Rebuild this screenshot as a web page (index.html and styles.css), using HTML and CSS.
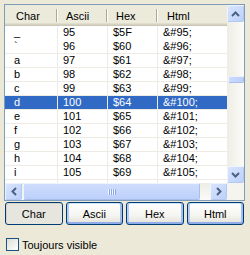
FILE: index.html
```html
<!DOCTYPE html>
<html>
<head>
<meta charset="utf-8">
<link rel="stylesheet" href="styles.css">
</head>
<body>
<div class="win">
  <div class="lv">
    <div class="view">
      <div class="hdr">
        <div class="hc c1">Char</div>
        <div class="hc">Ascii</div>
        <div class="hc">Hex</div>
        <div class="hc c4">Html</div>
      </div>
      <div class="rows">
        <div class="row noline"><div class="cell c1">_</div><div class="cell">95</div><div class="cell">$5F</div><div class="cell c4">&amp;#95;</div></div>
        <div class="row"><div class="cell c1">`</div><div class="cell">96</div><div class="cell">$60</div><div class="cell c4">&amp;#96;</div></div>
        <div class="row"><div class="cell c1">a</div><div class="cell">97</div><div class="cell">$61</div><div class="cell c4">&amp;#97;</div></div>
        <div class="row"><div class="cell c1">b</div><div class="cell">98</div><div class="cell">$62</div><div class="cell c4">&amp;#98;</div></div>
        <div class="row"><div class="cell c1">c</div><div class="cell">99</div><div class="cell">$63</div><div class="cell c4">&amp;#99;</div></div>
        <div class="row sel"><div class="cell c1">d</div><div class="cell">100</div><div class="cell">$64</div><div class="cell c4">&amp;#100;</div></div>
        <div class="row"><div class="cell c1">e</div><div class="cell">101</div><div class="cell">$65</div><div class="cell c4">&amp;#101;</div></div>
        <div class="row"><div class="cell c1">f</div><div class="cell">102</div><div class="cell">$66</div><div class="cell c4">&amp;#102;</div></div>
        <div class="row"><div class="cell c1">g</div><div class="cell">103</div><div class="cell">$67</div><div class="cell c4">&amp;#103;</div></div>
        <div class="row"><div class="cell c1">h</div><div class="cell">104</div><div class="cell">$68</div><div class="cell c4">&amp;#104;</div></div>
        <div class="row"><div class="cell c1">i</div><div class="cell">105</div><div class="cell">$69</div><div class="cell c4">&amp;#105;</div></div>
        <div class="row"><div class="cell c1"></div><div class="cell"></div><div class="cell"></div><div class="cell c4"></div></div>
      </div>
    </div>
    <div class="vscroll">
      <div class="sbtn"><svg width="9" height="6" viewBox="0 0 9 6"><polyline points="1,5 4.5,1.5 8,5" fill="none" stroke="#4D6185" stroke-width="2"/></svg></div>
      <div class="vtrack"><div class="vthumb"></div></div>
      <div class="sbtn"><svg width="9" height="6" viewBox="0 0 9 6"><polyline points="1,1 4.5,4.5 8,1" fill="none" stroke="#4D6185" stroke-width="2"/></svg></div>
    </div>
    <div class="hscroll">
      <div class="sbtn"><svg width="6" height="9" viewBox="0 0 6 9"><polyline points="5,1 1.5,4.5 5,8" fill="none" stroke="#4D6185" stroke-width="2"/></svg></div>
      <div class="hthumb"><span class="grip"></span></div>
      <div class="htrack"></div>
      <div class="sbtn"><svg width="6" height="9" viewBox="0 0 6 9"><polyline points="1,1 4.5,4.5 1,8" fill="none" stroke="#4D6185" stroke-width="2"/></svg></div>
    </div>
    <div class="corner"></div>
  </div>
  <div class="btns">
    <button class="btn pressed">Char</button>
    <button class="btn">Ascii</button>
    <button class="btn">Hex</button>
    <button class="btn">Html</button>
  </div>
  <label class="chk"><span class="box"></span>Toujours visible</label>
</div>
</body>
</html>
```
FILE: styles.css
```css
html, body {
  margin: 0;
  padding: 0;
}
body {
  width: 250px;
  height: 255px;
  overflow: hidden;
  background: #ECE9D8;
  font-family: "Liberation Sans", Arial, sans-serif;
  font-size: 11px;
  color: #000;
}
.win {
  padding: 4px 0 0 4px;
  display: flex;
  flex-direction: column;
}
.lv {
  width: 241px;
  height: 197px;
  box-sizing: border-box;
  border: 1px solid #7F9DB9;
  background: #fff;
  display: grid;
  grid-template-columns: 222px 17px;
  grid-template-rows: 178px 17px;
}
.view {
  overflow: hidden;
  min-height: 0;
}
.hdr {
  display: flex;
  height: 21px;
  width: 240px;
}
.hc {
  box-sizing: border-box;
  width: 50px;
  flex: none;
  padding: 3px 0 0 8px;
  line-height: 16px;
  white-space: nowrap;
  background:
    linear-gradient(#ACA899, #ACA899) right 1px top 4px / 1px 13px no-repeat,
    linear-gradient(#FFFFFF, #FFFFFF) right 0 top 4px / 1px 13px no-repeat,
    linear-gradient(to bottom, #EBEADB 0 18px, #E2DECD 18px 19px, #D6D2C2 19px 20px, #CBC7B8 20px 21px);
}
.hc.c1 {
  width: 53px;
  padding-left: 11px;
}
.hc.c4 {
  width: 87px;
  padding-left: 9px;
}
.rows {
  width: 240px;
}
.row {
  display: flex;
  height: 14px;
}
.cell {
  box-sizing: border-box;
  width: 50px;
  flex: none;
  height: 14px;
  padding-left: 5px;
  line-height: 13px;
  white-space: nowrap;
  border-right: 1px solid #EDEBE3;
  border-bottom: 1px solid #EDEBE3;
}
.cell.c1 {
  width: 53px;
  padding-left: 9px;
}
.cell.c4 {
  width: 87px;
}
.row.noline .cell {
  border-bottom-color: #fff;
}
.row.sel .cell {
  background: #316AC5;
  color: #fff;
}
.vscroll {
  display: flex;
  flex-direction: column;
  background: linear-gradient(to right, #EEEDE5, #FBFBF8);
}
.sbtn {
  box-sizing: border-box;
  width: 17px;
  height: 17px;
  flex: none;
  display: flex;
  align-items: center;
  justify-content: center;
  border: 1px solid #EEF3FE;
  border-right-color: #B5C8F2;
  border-bottom-color: #B5C8F2;
  border-radius: 2px;
  background: linear-gradient(135deg, #D9E5FD, #BCD0FA);
}
.vtrack {
  flex: 1;
  display: flex;
  flex-direction: column;
  align-items: center;
}
.vthumb {
  box-sizing: border-box;
  width: 16px;
  height: 7px;
  margin-top: 54px;
  border: 1px solid #EEF3FE;
  border-right-color: #A9BEEB;
  border-bottom-color: #A9BEEB;
  border-radius: 2px;
  background: linear-gradient(to right, #CADAFC, #BCD0FA);
}
.hscroll {
  display: flex;
  background: linear-gradient(to bottom, #EEEDE5, #FBFBF8);
}
.hthumb {
  box-sizing: border-box;
  width: 177px;
  height: 17px;
  margin-left: 1px;
  display: flex;
  align-items: center;
  justify-content: center;
  border: 1px solid #EEF3FE;
  border-right-color: #A9BEEB;
  border-bottom-color: #A9BEEB;
  border-radius: 2px;
  background: linear-gradient(to bottom, #CFDDFD, #BCD0FA);
}
.grip {
  width: 8px;
  height: 6px;
  background: repeating-linear-gradient(to right, #EEF4FE 0 1px, #8CA7E3 1px 2px);
}
.htrack {
  flex: 1;
}
.corner {
  background: #F5F4EF;
}
.btns {
  margin: 1px 0 0 1px;
  width: 239px;
  display: grid;
  grid-template-columns: repeat(4, 1fr);
  gap: 3px;
}
.btn {
  height: 23px;
  margin: 0;
  padding: 0;
  font-family: "Liberation Sans", Arial, sans-serif;
  font-size: 11px;
  color: #000;
  border: 1px solid #003C74;
  border-radius: 3px;
  background: linear-gradient(to bottom, #FFFFFF, #F4F4F0 60%, #E3E1D8);
  box-shadow: inset 0 -2px 0 #8FADE8, inset 2px 0 0 #B7CCF4, inset -2px 0 0 #A3BDEE, inset 0 1px 0 #CEE7FF;
}
.btn.pressed {
  background: #E6E5DE;
  box-shadow: inset 1px 1px 0 #D5D3C9;
}
.chk {
  margin: 13px 0 0 2px;
  display: flex;
  align-items: center;
  height: 13px;
}
.box {
  box-sizing: border-box;
  width: 13px;
  height: 13px;
  margin-right: 3px;
  border: 1px solid #1C5180;
  background: linear-gradient(135deg, #DCDCD7, #FFFFFF);
}
```
